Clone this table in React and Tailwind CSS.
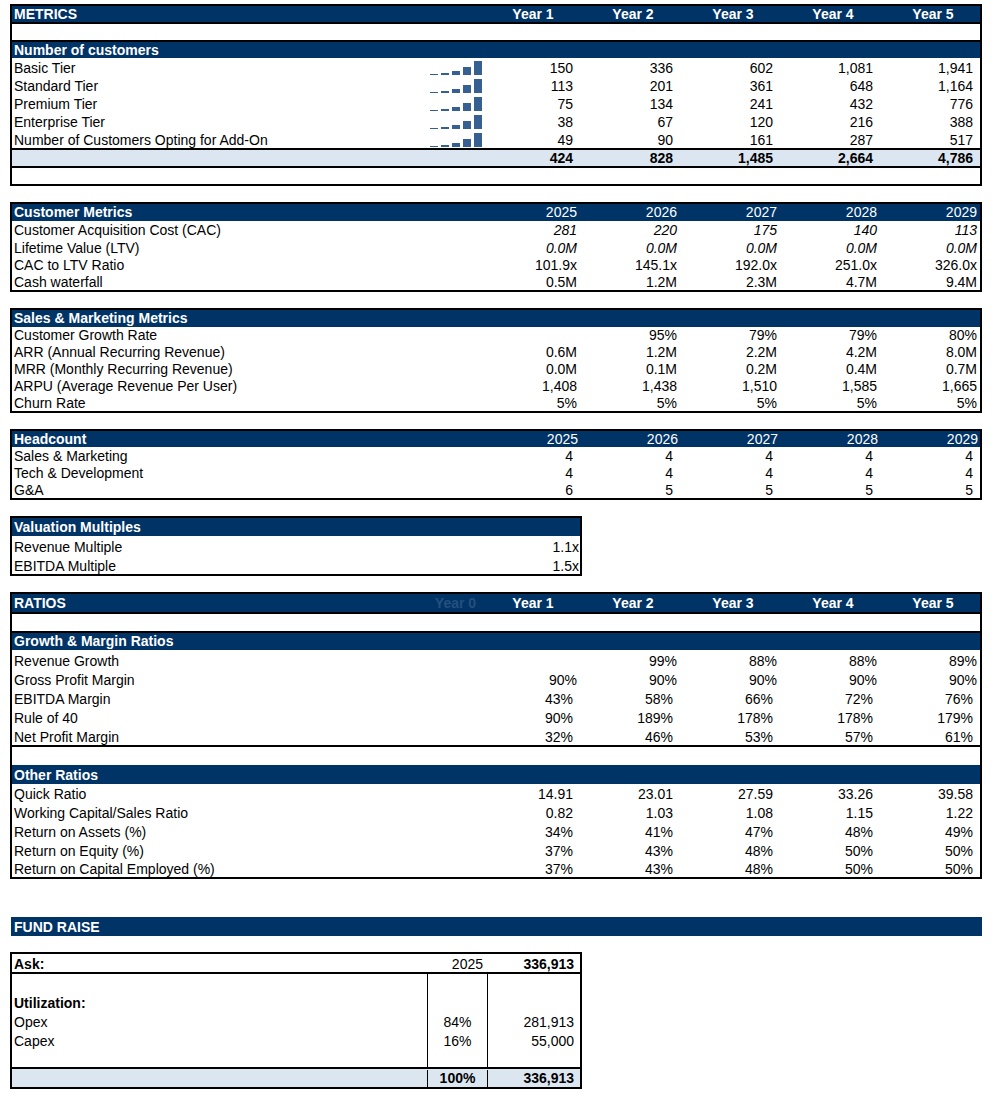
const years = ['Year 1', 'Year 2', 'Year 3', 'Year 4', 'Year 5'];
const calYears = ['2025', '2026', '2027', '2028', '2029'];

const customers = [
  { label: 'Basic Tier', values: [150, 336, 602, 1081, 1941] },
  { label: 'Standard Tier', values: [113, 201, 361, 648, 1164] },
  { label: 'Premium Tier', values: [75, 134, 241, 432, 776] },
  { label: 'Enterprise Tier', values: [38, 67, 120, 216, 388] },
  { label: 'Number of Customers Opting for Add-On', values: [49, 90, 161, 287, 517] },
];
const customerTotals = ['424', '828', '1,485', '2,664', '4,786'];

const customerMetrics = [
  { label: 'Customer Acquisition Cost (CAC)', values: ['281', '220', '175', '140', '113'], italic: true, h: 'h-[17px] leading-[17px]' },
  { label: 'Lifetime Value (LTV)', values: ['0.0M', '0.0M', '0.0M', '0.0M', '0.0M'], italic: true, h: 'h-[18px] leading-[18px]' },
  { label: 'CAC to LTV Ratio', values: ['101.9x', '145.1x', '192.0x', '251.0x', '326.0x'], h: 'h-[17px] leading-[17px]' },
  { label: 'Cash waterfall', values: ['0.5M', '1.2M', '2.3M', '4.7M', '9.4M'], h: 'h-[17px] leading-[17px]' },
];

const salesMetrics = [
  { label: 'Customer Growth Rate', values: ['', '95%', '79%', '79%', '80%'], h: 'h-[17px] leading-[17px]' },
  { label: 'ARR (Annual Recurring Revenue)', values: ['0.6M', '1.2M', '2.2M', '4.2M', '8.0M'], h: 'h-[17px] leading-[17px]' },
  { label: 'MRR (Monthly Recurring Revenue)', values: ['0.0M', '0.1M', '0.2M', '0.4M', '0.7M'], h: 'h-[17px] leading-[17px]' },
  { label: 'ARPU (Average Revenue Per User)', values: ['1,408', '1,438', '1,510', '1,585', '1,665'], h: 'h-[17px] leading-[17px]' },
  { label: 'Churn Rate', values: ['5%', '5%', '5%', '5%', '5%'], h: 'h-[16px] leading-[16px]' },
];

const headcount = [
  { label: 'Sales & Marketing', values: ['4', '4', '4', '4', '4'] },
  { label: 'Tech & Development', values: ['4', '4', '4', '4', '4'] },
  { label: 'G&A', values: ['6', '5', '5', '5', '5'] },
];

const growthRatios = [
  { label: 'Revenue Growth', values: ['', '99%', '88%', '88%', '89%'], pad: 'pr-[3px]' },
  { label: 'Gross Profit Margin', values: ['90%', '90%', '90%', '90%', '90%'], pad: 'pr-[3px]' },
  { label: 'EBITDA Margin', values: ['43%', '58%', '66%', '72%', '76%'], pad: 'pr-[7px]' },
  { label: 'Rule of 40', values: ['90%', '189%', '178%', '178%', '179%'], pad: 'pr-[7px]' },
  { label: 'Net Profit Margin', values: ['32%', '46%', '53%', '57%', '61%'], pad: 'pr-[7px]' },
];

const otherRatios = [
  { label: 'Quick Ratio', values: ['14.91', '23.01', '27.59', '33.26', '39.58'], h: 'h-[19px] leading-[19px]' },
  { label: 'Working Capital/Sales Ratio', values: ['0.82', '1.03', '1.08', '1.15', '1.22'], h: 'h-[19px] leading-[19px]' },
  { label: 'Return on Assets (%)', values: ['34%', '41%', '47%', '48%', '49%'], h: 'h-[19px] leading-[19px]' },
  { label: 'Return on Equity (%)', values: ['37%', '43%', '48%', '50%', '50%'], h: 'h-[18px] leading-[18px]' },
  { label: 'Return on Capital Employed (%)', values: ['37%', '43%', '48%', '50%', '50%'], h: 'h-[18px] leading-[18px]' },
];

const Spark = ({ values }) => {
  const max = Math.max(...values);
  return (
    <div className="flex h-[18px] items-end gap-[3px] pb-[1px]">
      {values.map((v, i) => (
        <div key={i} className="w-[8px] shrink-0 bg-[#376092]" style={{ height: Math.max(1, Math.round((v / max) * 14)) }} />
      ))}
    </div>
  );
};

const NavyBar = ({ className, children }) => (
  <div className={`flex bg-[#003366] font-bold text-white ${className}`}>{children}</div>
);

const App = () => {
  return (
    <div className="min-h-screen bg-white pt-[4px] pb-[9px] font-['Liberation_Sans',Arial,sans-serif] text-[14px] text-black">
      {/* Metrics */}
      <div className="ml-[10px] w-[972px] border-2 border-black">
        <NavyBar className="h-[18px] border-b-2 border-black leading-[16px]">
          <div className="w-[468px] pl-[2px]">METRICS</div>
          {years.map((y) => (
            <div key={y} className="w-[100px] pl-[6px] text-center">{y}</div>
          ))}
        </NavyBar>
        <div className="h-[18px] border-b-2 border-black" />
        <NavyBar className="h-[16px] pl-[2px] leading-[16px]">Number of customers</NavyBar>
        {customers.map((r) => (
          <div key={r.label} className="flex h-[18px] leading-[18px]">
            <div className="w-[418px] pl-[2px] pt-[1px]">{r.label}</div>
            <div className="w-[50px]"><Spark values={r.values} /></div>
            {r.values.map((v, i) => (
              <div key={i} className="w-[100px] pt-[1px] pr-[7px] text-right">{v.toLocaleString('en-US')}</div>
            ))}
          </div>
        ))}
        <div className="flex h-[20px] border-y-2 border-black bg-[#dce6f1] font-bold leading-[16px]">
          <div className="w-[468px]" />
          {customerTotals.map((v, i) => (
            <div key={i} className="w-[100px] pr-[7px] text-right">{v}</div>
          ))}
        </div>
        <div className="h-[16px]" />
      </div>

      {/* Customer metrics */}
      <div className="mt-[16px] ml-[10px] w-[972px] border-2 border-black">
        <NavyBar className="h-[17px] leading-[17px]">
          <div className="w-[468px] pl-[2px]">Customer Metrics</div>
          {calYears.map((y) => (
            <div key={y} className="w-[100px] pr-[3px] text-right font-normal">{y}</div>
          ))}
        </NavyBar>
        {customerMetrics.map((r) => (
          <div key={r.label} className={`flex pt-[1px] ${r.h}`}>
            <div className="w-[468px] pl-[2px]">{r.label}</div>
            {r.values.map((v, i) => (
              <div key={i} className={`w-[100px] pr-[3px] text-right ${r.italic ? 'italic' : ''}`}>{v}</div>
            ))}
          </div>
        ))}
      </div>

      {/* Sales & marketing */}
      <div className="mt-[16px] ml-[10px] w-[972px] border-2 border-black">
        <NavyBar className="h-[17px] pl-[2px] leading-[17px]">Sales &amp; Marketing Metrics</NavyBar>
        {salesMetrics.map((r) => (
          <div key={r.label} className={`flex ${r.h}`}>
            <div className="w-[468px] pl-[2px]">{r.label}</div>
            {r.values.map((v, i) => (
              <div key={i} className="w-[100px] pr-[3px] text-right">{v}</div>
            ))}
          </div>
        ))}
      </div>

      {/* Headcount */}
      <div className="mt-[16px] ml-[10px] w-[972px] border-2 border-black">
        <NavyBar className="h-[16px] leading-[16px]">
          <div className="w-[468px] pl-[2px]">Headcount</div>
          {calYears.map((y) => (
            <div key={y} className="w-[100px] pr-[2px] text-right font-normal">{y}</div>
          ))}
        </NavyBar>
        {headcount.map((r) => (
          <div key={r.label} className="flex h-[17px] pt-[1px] leading-[17px]">
            <div className="w-[468px] pl-[2px]">{r.label}</div>
            {r.values.map((v, i) => (
              <div key={i} className="w-[100px] pr-[7px] text-right">{v}</div>
            ))}
          </div>
        ))}
      </div>

      {/* Valuation */}
      <div className="mt-[16px] ml-[10px] w-[572px] border-2 border-black">
        <NavyBar className="h-[18px] pl-[2px] leading-[18px]">Valuation Multiples</NavyBar>
        <div className="flex h-[19px] pt-[2px] leading-[19px]">
          <div className="w-[468px] pl-[2px]">Revenue Multiple</div>
          <div className="w-[100px] pr-[1px] text-right">1.1x</div>
        </div>
        <div className="flex h-[19px] pt-[2px] leading-[19px]">
          <div className="w-[468px] pl-[2px]">EBITDA Multiple</div>
          <div className="w-[100px] pr-[1px] text-right">1.5x</div>
        </div>
      </div>

      {/* Ratios */}
      <div className="mt-[16px] ml-[10px] w-[972px] border-2 border-black">
        <NavyBar className="h-[20px] border-b-2 border-black leading-[18px]">
          <div className="w-[418px] pl-[2px]">RATIOS</div>
          <div className="w-[50px] pl-[1px] text-center text-[#24507e]">Year 0</div>
          {years.map((y) => (
            <div key={y} className="w-[100px] pl-[6px] text-center">{y}</div>
          ))}
        </NavyBar>
        <div className="h-[19px] border-b-2 border-black" />
        <NavyBar className="h-[17px] pl-[2px] leading-[17px]">Growth &amp; Margin Ratios</NavyBar>
        {growthRatios.map((r) => (
          <div key={r.label} className="flex h-[19px] pt-[2px] leading-[19px]">
            <div className="w-[468px] pl-[2px]">{r.label}</div>
            {r.values.map((v, i) => (
              <div key={i} className={`w-[100px] text-right ${r.pad}`}>{v}</div>
            ))}
          </div>
        ))}
        <div className="h-[20px] border-t-2 border-black" />
        <NavyBar className="h-[19px] pl-[2px] pt-[1px] leading-[19px]">Other Ratios</NavyBar>
        {otherRatios.map((r) => (
          <div key={r.label} className={`flex pt-[1px] ${r.h}`}>
            <div className="w-[468px] pl-[2px]">{r.label}</div>
            {r.values.map((v, i) => (
              <div key={i} className="w-[100px] pr-[7px] text-right">{v}</div>
            ))}
          </div>
        ))}
      </div>

      {/* Fund raise */}
      <NavyBar className="mt-[38px] ml-[11px] h-[19px] w-[971px] pl-[3px] pt-[1px] leading-[19px]">FUND RAISE</NavyBar>

      <div className="mt-[16px] ml-[10px] w-[572px] border-2 border-black">
        <div className="flex h-[20px] border-b-2 border-black pt-[1px] leading-[18px]">
          <div className="w-[415px] pl-[2px] font-bold">Ask:</div>
          <div className="w-[60px] pr-[4px] text-right">2025</div>
          <div className="w-[93px] pr-[6px] text-right font-bold">336,913</div>
        </div>
        <div className="flex border-b-2 border-black">
          <div className="w-[415px] pt-[1px] pl-[2px]">
            <div className="h-[19px]" />
            <div className="h-[19px] font-bold leading-[19px]">Utilization:</div>
            <div className="h-[19px] leading-[19px]">Opex</div>
            <div className="h-[19px] leading-[19px]">Capex</div>
            <div className="h-[16px]" />
          </div>
          <div className="w-[60px] border-l border-black pt-[1px] text-center">
            <div className="h-[38px]" />
            <div className="h-[19px] leading-[19px]">84%</div>
            <div className="h-[19px] leading-[19px]">16%</div>
          </div>
          <div className="w-[93px] border-l border-black pt-[1px] pr-[6px] text-right">
            <div className="h-[38px]" />
            <div className="h-[19px] leading-[19px]">281,913</div>
            <div className="h-[19px] leading-[19px]">55,000</div>
          </div>
        </div>
        <div className="flex h-[18px] bg-[#dce6f1] pt-[1px] font-bold leading-[17px]">
          <div className="w-[415px]" />
          <div className="w-[60px] border-l border-black text-center">100%</div>
          <div className="w-[93px] border-l border-black pr-[6px] text-right">336,913</div>
        </div>
      </div>
    </div>
  );
};

export default App;
